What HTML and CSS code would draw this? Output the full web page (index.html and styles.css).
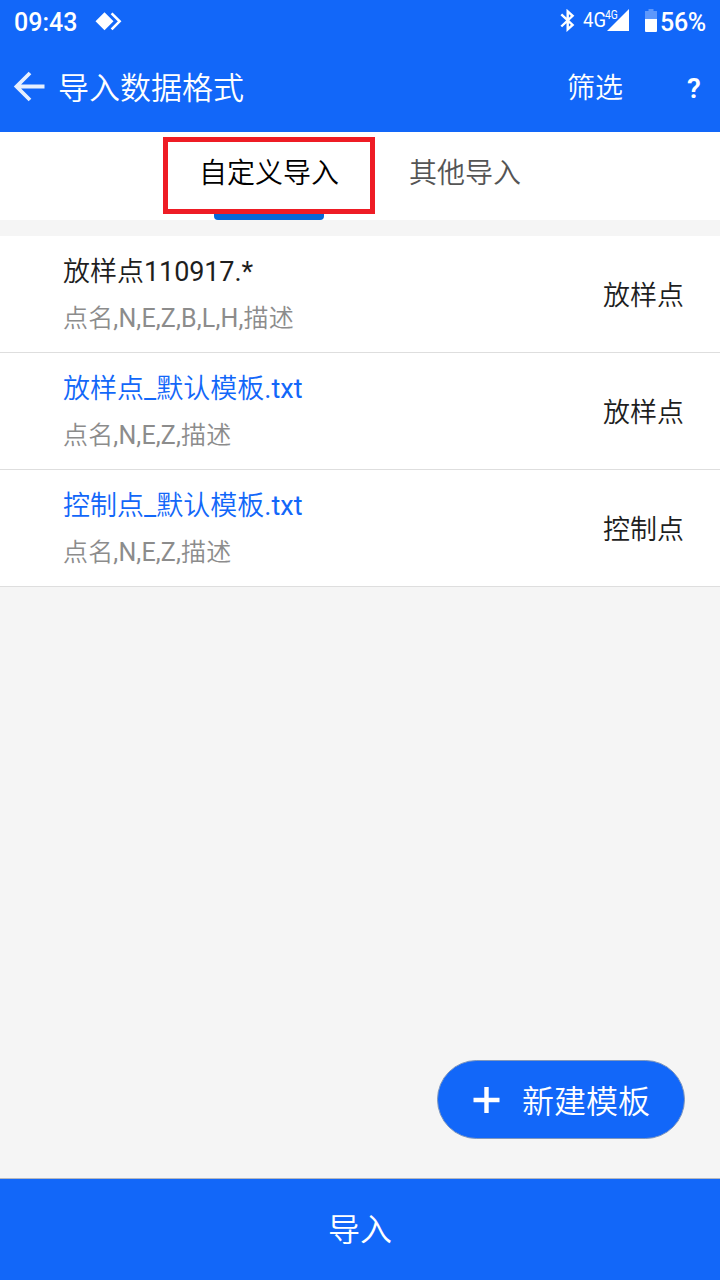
FILE: index.html
```html
<!DOCTYPE html>
<html lang="zh-CN">
<head>
<meta charset="utf-8">
<title>导入数据格式</title>
<link rel="stylesheet" href="styles.css">
</head>
<body>
<div class="screen">
  <div class="status">
    <span class="clock">09:43</span>
    <svg class="remote" width="27" height="19" viewBox="0 0 27 19"><path d="M9.5.3 18.5 9.3 9.5 18.3.5 9.3z" fill="#fff"/><path d="M16.6 1.3 24.6 9.3 16.6 17.3" fill="none" stroke="#fff" stroke-width="2.6"/></svg>
    <svg class="bluetooth" width="15" height="23" viewBox="0 0 15 23"><path d="M1.3 5.3 12.6 16 7.7 20.4V2.4L12.6 6.8 1.3 17.5" fill="none" stroke="#fff" stroke-width="2.4"/></svg>
    <span class="network">4G</span>
    <div class="signal">
      <svg width="22" height="22" viewBox="0 0 22 22"><path d="M22 0V22H0z" fill="#fff"/></svg>
      <span class="signal-type">4G</span>
    </div>
    <svg class="battery" width="12" height="23" viewBox="0 0 12 23"><path d="M3.5 0h5v2H12v8H0V2h3.5z" fill="#fff" opacity=".32"/><path d="M0 10h12v12a1 1 0 0 1-1 1H1a1 1 0 0 1-1-1z" fill="#fff"/></svg>
    <span class="percent">56%</span>
  </div>
  <header class="header">
    <svg class="back" width="32" height="32" viewBox="0 0 32 32"><path d="M31.5 15.5H3.5M17 2 3.5 15.5 17 29" fill="none" stroke="#e6effe" stroke-width="3.8"/></svg>
    <h1 class="title">导入数据格式</h1>
    <span class="filter">筛选</span>
    <span class="help">?</span>
  </header>
  <nav class="tabs">
    <div class="tab tab-active">自定义导入<span class="indicator"></span><span class="highlight"></span></div>
    <div class="tab">其他导入</div>
  </nav>
  <main class="list">
    <div class="row">
      <div class="info"><div class="name">放样点<span class="latin">110917.*</span></div><div class="fields">点名<span class="latin">,N,E,Z,B,L,H,</span>描述</div></div>
      <div class="kind">放样点</div>
    </div>
    <div class="row">
      <div class="info"><div class="name preset">放样点<span class="latin">_</span>默认模板<span class="latin">.txt</span></div><div class="fields">点名<span class="latin">,N,E,Z,</span>描述</div></div>
      <div class="kind">放样点</div>
    </div>
    <div class="row">
      <div class="info"><div class="name preset">控制点<span class="latin">_</span>默认模板<span class="latin">.txt</span></div><div class="fields">点名<span class="latin">,N,E,Z,</span>描述</div></div>
      <div class="kind">控制点</div>
    </div>
  </main>
  <div class="create">
    <svg width="28" height="28" viewBox="0 0 28 28"><path d="M14.5 1v26M1.5 14h26" stroke="#fff" stroke-width="4.4"/></svg>
    <span>新建模板</span>
  </div>
  <footer class="import">导入</footer>
</div>
</body>
</html>
```
FILE: styles.css
```css
* { box-sizing: border-box; }
body {
  margin: 0;
  font-family: Roboto, "Noto Sans CJK SC", sans-serif;
  font-weight: 400;
}
svg { display: block; flex: none; }
.screen {
  display: flex;
  flex-direction: column;
  width: 720px;
  height: 1280px;
  overflow: hidden;
  background: #f5f5f5;
}
.status {
  display: flex;
  align-items: flex-start;
  height: 44px;
  padding-left: 14px;
  background: #1267f9;
  color: #fff;
  white-space: nowrap;
}
.clock, .percent {
  margin-top: 8px;
  font-size: 25px;
  font-weight: 500;
  line-height: 30px;
}
.clock { width: 63px; }
.remote { margin: 12px 0 0 18px; }
.bluetooth { margin: 9px 0 0 438px; }
.network {
  width: 21px;
  margin: 8px 3px 0 8px;
  font-size: 21px;
  line-height: 25px;
  transform: scaleX(.88);
  transform-origin: left;
}
.signal { position: relative; margin-top: 9px; }
.signal-type {
  position: absolute;
  left: -2px;
  top: 0;
  font-size: 12px;
  line-height: 12px;
  transform: scaleX(.86);
  transform-origin: left;
}
.battery { margin: 9px 0 0 16px; }
.percent { margin-left: 3px; letter-spacing: -.3px; }
.header {
  display: flex;
  align-items: center;
  height: 88px;
  padding: 0 17px 0 13px;
  background: #1267f9;
  color: #fff;
}
.back { margin-top: -3px; }
.title {
  flex: 1;
  margin: 2px 0 0 13px;
  font-size: 31px;
  font-weight: 350;
  line-height: 44px;
}
.filter { margin-top: 2px; font-size: 28px; font-weight: 350; line-height: 40px; }
.help { width: 16px; margin-left: 64px; font-size: 28px; font-weight: 600; }
.tabs {
  display: flex;
  justify-content: center;
  gap: 34px;
  height: 88px;
  background: #fff;
}
.tab {
  padding: 0 18px;
  color: #555;
  font-size: 28px;
  font-weight: 350;
  line-height: 84px;
}
.tab-active { position: relative; color: #000; }
.indicator {
  position: absolute;
  left: 33px;
  top: 78px;
  width: 110px;
  height: 10px;
  border-radius: 4px;
  background: #0468d8;
}
.highlight {
  position: absolute;
  left: -18px;
  top: 5px;
  width: 212px;
  height: 77px;
  border: 5px solid #ee1c25;
}
.list { margin-top: 16px; }
.row {
  display: flex;
  align-items: center;
  justify-content: space-between;
  height: 117px;
  padding: 2px 36px 0 63px;
  border-bottom: 1px solid #dedede;
  background: #fff;
  color: #1e1e1e;
  font-weight: 350;
}
.latin { font-weight: 400; }
.name { font-size: 27px; line-height: 48px; }
.name .latin { letter-spacing: -.1px; }
.preset { color: #1267f9; }
.preset .latin { letter-spacing: .05px; }
.fields { color: #8c8c8c; font-size: 25px; line-height: 46px; letter-spacing: .15px; }
.kind { margin-top: 1px; font-size: 27px; line-height: 40px; }
.create {
  display: flex;
  align-items: center;
  align-self: flex-end;
  gap: 22px;
  width: 248px;
  height: 79px;
  margin: auto 35.5px 39px 0;
  padding-left: 34.5px;
  border: 1px solid #7f97bd;
  border-radius: 40px;
  background: #1267f9;
  color: #fff;
  font-size: 32px;
  font-weight: 350;
}
.create span { margin-top: -1px; }
.import {
  height: 102px;
  border-top: 1px solid #b5b8be;
  background: #1267f9;
  color: #fff;
  font-size: 32px;
  font-weight: 350;
  line-height: 103px;
  text-align: center;
}
```
